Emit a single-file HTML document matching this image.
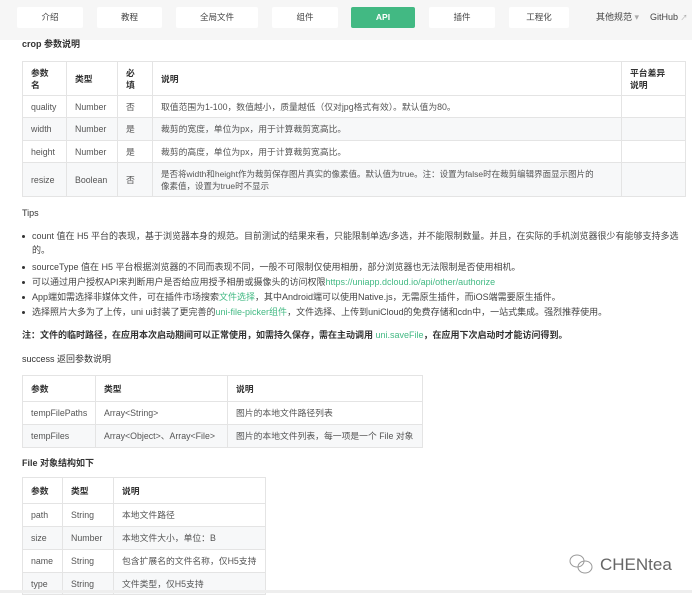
<!DOCTYPE html>
<html><head><meta charset="utf-8"><style>
*{box-sizing:border-box;margin:0;padding:0}
body{width:692px;height:593px;overflow:hidden;background:#fff;font-family:"Liberation Sans","Noto Sans CJK SC",sans-serif;font-size:9px;color:#333;position:relative}
.nav{position:absolute;left:0;top:0;width:692px;height:40px;background:#f6f6f6}
.btn{position:absolute;top:7px;height:21px;background:#fff;border-radius:2px;text-align:center;line-height:21px;font-size:8.5px;color:#444}
.api{background:#42b983;color:#fff;font-weight:bold}
.t{position:absolute;white-space:nowrap;line-height:11px}
table{position:absolute;border-collapse:collapse;font-size:8.8px;color:#555;line-height:12px;table-layout:fixed}
td,th{border:1px solid #e4e4e4;padding:0 8px;text-align:left;vertical-align:middle}
th{font-weight:bold;color:#333}
tr.g td{background:#f7f8f9}
.b{position:absolute;left:32px;white-space:nowrap;line-height:11px;color:#444}
.b:before{content:"";position:absolute;left:-10px;top:4px;width:3px;height:3px;background:#333;border-radius:50%}
.l{color:#42b983}
</style></head><body>
<div class="nav">
<div class="btn" style="left:17px;width:66px">介绍</div>
<div class="btn" style="left:97px;width:65px">教程</div>
<div class="btn" style="left:176px;width:82px">全局文件</div>
<div class="btn" style="left:272px;width:66px">组件</div>
<div class="btn api" style="left:351px;width:64px">API</div>
<div class="btn" style="left:429px;width:66px">插件</div>
<div class="btn" style="left:509px;width:60px">工程化</div>
<div class="t" style="left:596px;top:12px;color:#444">其他规范 <span style="color:#aaa">▾</span></div>
<div class="t" style="left:650px;top:12px;color:#444">GitHub <span style="color:#aaa;font-size:7px">↗</span></div>
</div>
<div class="t" style="left:22px;top:39px;font-weight:bold">crop 参数说明</div>
<table style="left:22px;top:61px;width:664px">
<tr style="height:34px"><th style="width:44px">参数<br>名</th><th style="width:51px">类型</th><th style="width:35px">必<br>填</th><th>说明</th><th style="width:64px">平台差异<br>说明</th></tr>
<tr style="height:22px"><td>quality</td><td>Number</td><td>否</td><td>取值范围为1-100，数值越小，质量越低（仅对jpg格式有效）。默认值为80。</td><td></td></tr>
<tr class="g" style="height:23px"><td>width</td><td>Number</td><td>是</td><td>裁剪的宽度，单位为px，用于计算裁剪宽高比。</td><td></td></tr>
<tr style="height:22px"><td>height</td><td>Number</td><td>是</td><td>裁剪的高度，单位为px，用于计算裁剪宽高比。</td><td></td></tr>
<tr class="g" style="height:34px"><td>resize</td><td>Boolean</td><td>否</td><td style="white-space:nowrap;overflow:hidden;font-size:8.5px">是否将width和height作为裁剪保存图片真实的像素值。默认值为true。注：设置为false时在裁剪编辑界面显示图片的<br>像素值，设置为true时不显示</td><td></td></tr>
</table>
<div class="t" style="left:22px;top:208px">Tips</div>
<div class="b" style="top:231px">count 值在 H5 平台的表现，基于浏览器本身的规范。目前测试的结果来看，只能限制单选/多选，并不能限制数量。并且，在实际的手机浏览器很少有能够支持多选</div>
<div class="t" style="left:32px;top:245px;color:#444">的。</div>
<div class="b" style="top:262px">sourceType 值在 H5 平台根据浏览器的不同而表现不同，一般不可限制仅使用相册，部分浏览器也无法限制是否使用相机。</div>
<div class="b" style="top:277px">可以通过用户授权API来判断用户是否给应用授予相册或摄像头的访问权限<span class="l">https://uniapp.dcloud.io/api/other/authorize</span></div>
<div class="b" style="top:292px">App端如需选择非媒体文件，可在插件市场搜索<span class="l">文件选择</span>，其中Android端可以使用Native.js，无需原生插件，而iOS端需要原生插件。</div>
<div class="b" style="top:307px">选择照片大多为了上传，uni ui封装了更完善的<span class="l">uni-file-picker组件</span>，文件选择、上传到uniCloud的免费存储和cdn中，一站式集成。强烈推荐使用。</div>
<div class="t" style="left:22px;top:330px;font-weight:bold">注：文件的临时路径，在应用本次启动期间可以正常使用，如需持久保存，需在主动调用 <span class="l" style="font-weight:normal">uni.saveFile</span>，在应用下次启动时才能访问得到。</div>
<div class="t" style="left:22px;top:354px">success 返回参数说明</div>
<table style="left:22px;top:375px;width:401px">
<tr style="height:26px"><th style="width:73px">参数</th><th style="width:132px">类型</th><th>说明</th></tr>
<tr style="height:23px"><td>tempFilePaths</td><td>Array&lt;String&gt;</td><td>图片的本地文件路径列表</td></tr>
<tr class="g" style="height:23px"><td>tempFiles</td><td>Array&lt;Object&gt;、Array&lt;File&gt;</td><td>图片的本地文件列表，每一项是一个 File 对象</td></tr>
</table>
<div class="t" style="left:22px;top:458px;font-weight:bold">File 对象结构如下</div>
<table style="left:22px;top:477px;width:244px">
<tr style="height:26px"><th style="width:40px">参数</th><th style="width:51px">类型</th><th>说明</th></tr>
<tr style="height:23px"><td>path</td><td>String</td><td>本地文件路径</td></tr>
<tr class="g" style="height:23px"><td>size</td><td>Number</td><td>本地文件大小，单位：B</td></tr>
<tr style="height:23px"><td>name</td><td>String</td><td>包含扩展名的文件名称，仅H5支持</td></tr>
<tr class="g" style="height:22px"><td>type</td><td>String</td><td>文件类型，仅H5支持</td></tr>
</table>
<svg style="position:absolute;left:568px;top:553px" width="26" height="22" viewBox="0 0 26 22"><g fill="none" stroke="#999" stroke-width="1"><ellipse cx="9" cy="8" rx="7" ry="6"/><ellipse cx="17" cy="14" rx="7" ry="6"/></g></svg>
<div class="t" style="left:600px;top:555px;font-size:17px;line-height:20px;color:#666">CHENtea</div>
<div style="position:absolute;left:0;top:590px;width:692px;height:3px;background:#eee"></div>
</body></html>
